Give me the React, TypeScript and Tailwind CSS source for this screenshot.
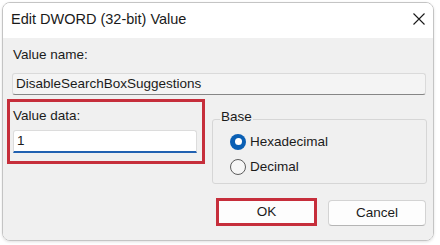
import React from "react";

const font = { fontFamily: '"Liberation Sans", Arial, sans-serif' };

function Radio({ checked, label }: { checked?: boolean; label: string }) {
  return (
    <div className="flex h-[25px] items-center">
      {checked ? (
        <span className="ml-[17px] flex h-[16px] w-[16px] items-center justify-center rounded-full bg-[#0a5fb4]">
          <span className="h-[7px] w-[7px] rounded-full bg-white" />
        </span>
      ) : (
        <span className="ml-[17px] h-[16px] w-[16px] rounded-full border border-[#5c5c5c] bg-[#f6f6f6]" />
      )}
      <span className="ml-[4px] text-[13.5px] leading-[16px] text-[#1b1b1b]">{label}</span>
    </div>
  );
}

export default function App() {
  return (
    <div className="h-[245px] w-[440px] bg-white pl-[2px] pt-[2px]" style={font}>
      <div className="flex h-[239px] w-[432px] flex-col overflow-hidden rounded-[8px] border border-[#c4c4c4] shadow-[0_1px_3px_rgba(0,0,0,0.12)]">
        {/* title bar */}
        <div className="flex h-[35px] shrink-0 items-start bg-white pl-[8px] pt-[6px]">
          <span className="text-[14.5px] leading-[20px] text-[#1a1a1a]">Edit DWORD (32-bit) Value</span>
          <svg className="ml-auto mr-[8px] mt-[4px]" width="12" height="12" viewBox="0 0 12 12">
            <path d="M0.5 0.5 L11.5 11.5 M11.5 0.5 L0.5 11.5" stroke="#1a1a1a" strokeWidth="1.1" fill="none" />
          </svg>
        </div>

        {/* body */}
        <div className="flex-1 bg-[#f0f0f0] pt-[9px]">
          <div className="ml-[10px] text-[13.5px] leading-[16px] text-[#1b1b1b]">Value name:</div>
          <div className="ml-[9px] mt-[10px] flex h-[22px] w-[414px] items-center rounded-[3px] border border-[#dadada] border-b-[#868686] bg-[#f4f4f4] pl-[3px] text-[13.5px] text-[#1b1b1b]">
            DisableSearchBoxSuggestions
          </div>

          <div className="mt-[4px] flex">
            {/* value data, marked in red */}
            <div className="ml-[4px] h-[65px] w-[198px] border-[3px] border-[#c62e3b] pl-[3px] pt-[6px]">
              <div className="text-[13.5px] leading-[16px] text-[#1b1b1b]">Value data:</div>
              <div className="mt-[6px] flex h-[23px] w-[184px] items-center rounded-t-[3px] border border-b-2 border-[#dcdcdc] border-b-[#2161b1] bg-white pl-[3px] text-[13.5px] text-[#1b1b1b]">
                1
              </div>
            </div>

            <div className="ml-[7px] flex flex-col">
              <fieldset className="mt-[10px] h-[75px] w-[215px] rounded-[3px] border border-[#d6d6d6] pb-[5px]">
                <legend className="ml-[7px] px-[1px] pb-[4px] text-[13.5px] leading-[16px] text-[#1b1b1b]">Base</legend>
                <Radio checked label="Hexadecimal" />
                <Radio label="Decimal" />
              </fieldset>

              <div className="mt-[14px] flex items-start">
                <div className="ml-[4px] flex h-[28px] w-[101px] items-center justify-center border-[3px] border-[#c62e3b] bg-[#fdfdfd] text-[13.5px] text-[#1b1b1b]">
                  OK
                </div>
                <div className="ml-[11px] mt-[2px] flex h-[26px] w-[98px] items-center justify-center rounded-[4px] border border-[#d3d3d3] border-b-[#b5b5b5] bg-[#fdfdfd] text-[13.5px] text-[#1b1b1b]">
                  Cancel
                </div>
              </div>
            </div>
          </div>
        </div>
      </div>
    </div>
  );
}
